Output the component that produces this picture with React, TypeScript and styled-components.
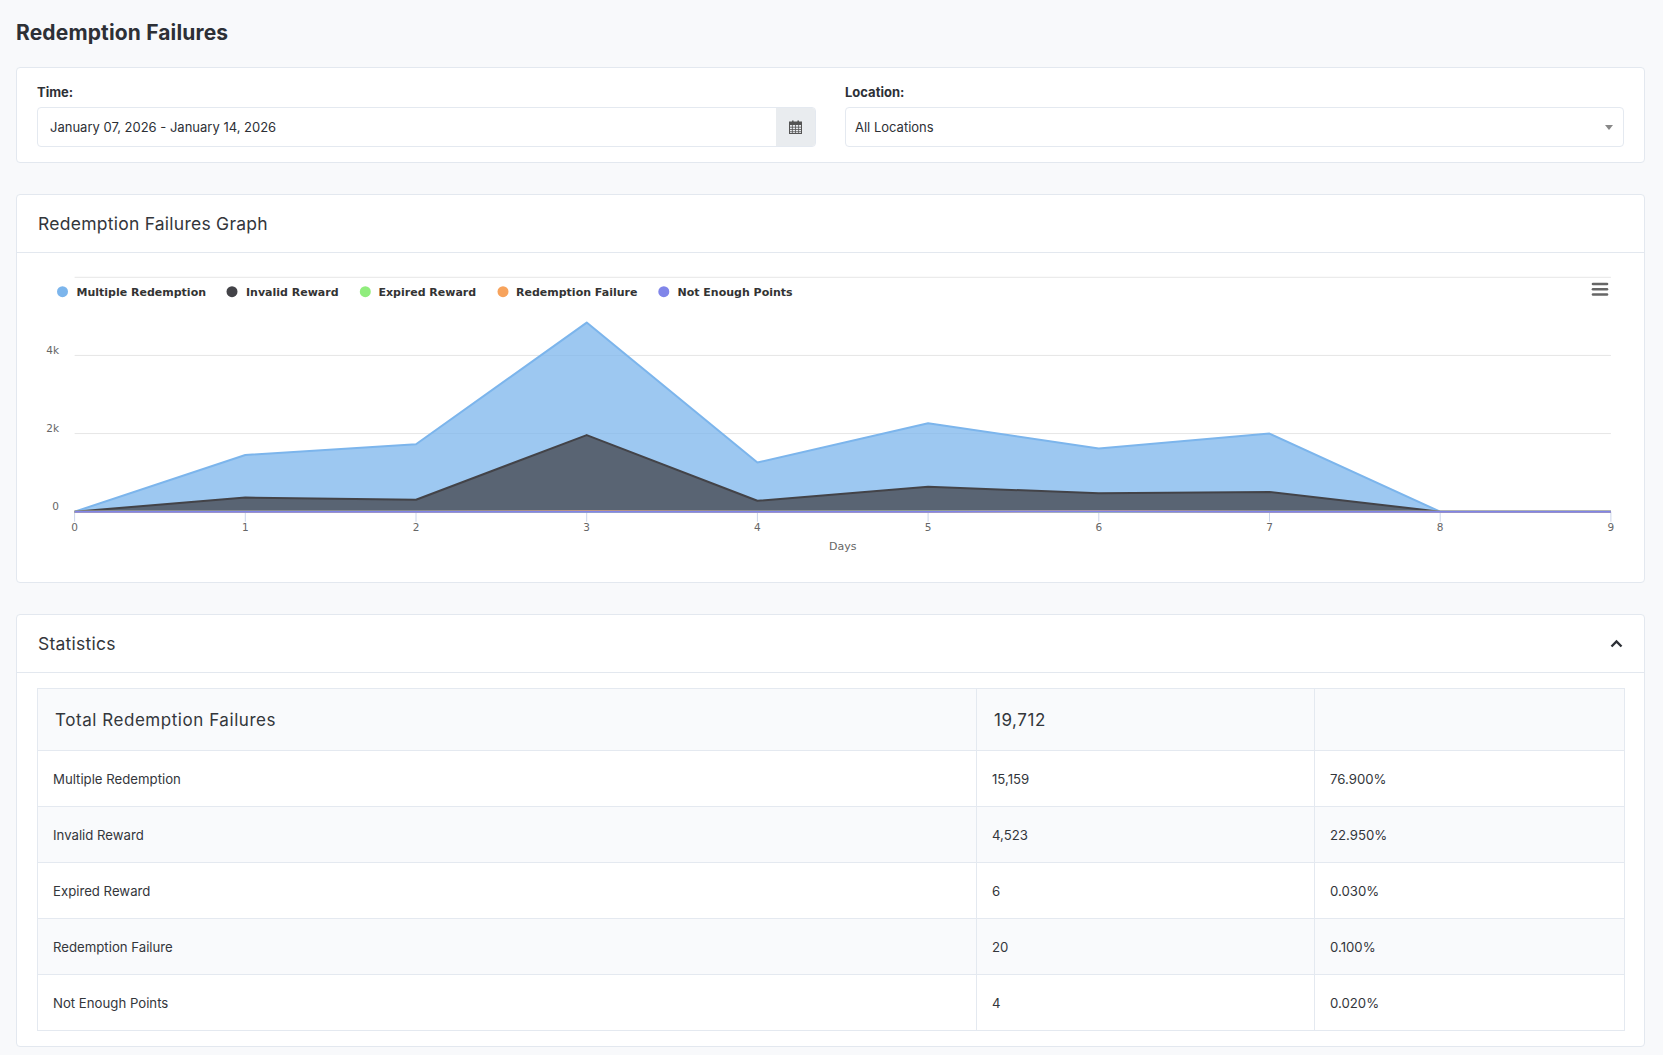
import React from 'react'
import styled, { createGlobalStyle } from 'styled-components'

// Page wide defaults.
const GlobalStyle = createGlobalStyle`
    body {
        margin: 0;
        background-color: #f8f9fb;
        font-family: Inter, Roboto, "Liberation Sans", Arial, sans-serif;
        color: #33363b;
    }
`

const chartFont = '"Lucida Grande", "Lucida Sans Unicode", "DejaVu Sans", Verdana, sans-serif'

const Page = styled.div`
    padding: 20px 18px 8px 16px;
    display: flex;
    flex-flow: column;
    gap: 31px;
`

const PageTitle = styled.h1`
    margin: 0 0 -10px 0;
    font-size: 21px;
    line-height: 26px;
    font-weight: bold;
    letter-spacing: 0.15px;
    color: #2d3036;
`

const Card = styled.section`
    background-color: #ffffff;
    border: 1px solid #e3e8ef;
    border-radius: 4px;
`

const CardHeader = styled.header`
    display: flex;
    justify-content: space-between;
    align-items: center;
    height: 57px;
    padding: 0 21px 0 21px;
    border-bottom: 1px solid #e3e8ef;
`

const CardTitle = styled.h2`
    margin: 0;
    font-size: 17.5px;
    font-weight: normal;
    letter-spacing: 0.25px;
    color: #33363b;
`

// üê∏: Filter bar with the time and location fields.
const FilterGrid = styled.div`
    display: grid;
    grid-template-columns: 1fr 1fr;
    gap: 29px;
    padding: 16px 20px 15px 20px;
`

const Field = styled.div`
    display: flex;
    flex-flow: column;
    gap: 7px;
`

const FieldLabel = styled.label`
    font-size: 13px;
    line-height: 16px;
    font-weight: bold;
    color: #2d3036;
`

const InputGroup = styled.div`
    display: flex;
    height: 40px;
    border: 1px solid #e4e9f0;
    border-radius: 4px;
    overflow: hidden;
    box-sizing: border-box;
`

const InputText = styled.div<{ $pad?: number }>`
    flex: 1;
    display: flex;
    align-items: center;
    justify-content: space-between;
    padding: 0 10px 0 ${(p) => p.$pad ?? 12}px;
    font-size: 13px;
    color: #2d3036;
`

const Addon = styled.div`
    width: 39px;
    display: flex;
    align-items: center;
    justify-content: center;
    background-color: #e9ecef;
`

const Caret = styled.span`
    width: 0;
    height: 0;
    border-left: 4px solid transparent;
    border-right: 4px solid transparent;
    border-top: 5px solid #888888;
`

const ChartBody = styled.div`
    padding: 15px 20px 14px 20px;
    height: 300px;
`

const TableBody = styled.div`
    padding: 15px 20px 15px 20px;
`

const StatsTable = styled.table`
    width: 100%;
    border-collapse: collapse;
    table-layout: fixed;
    color: #33363b;
`

const Row = styled.tr<{ $shade: boolean; $head?: boolean }>`
    height: ${(p) => (p.$head ? 62 : 56)}px;
    background-color: ${(p) => (p.$shade ? '#f9fafc' : '#ffffff')};
`

const Cell = styled.td<{ $head?: boolean }>`
    border: 1px solid #e4e9f0;
    padding: 0 16px;
    font-size: ${(p) => (p.$head ? 17 : 13.2)}px;
    letter-spacing: ${(p) => (p.$head ? '0.55px' : 'normal')};
    padding-left: ${(p) => (p.$head ? 17 : 15)}px;
`

const CalendarIcon = () => (
    <svg width="13" height="14" viewBox="0 0 13 14">
        <rect x="0.5" y="2" width="12" height="11.5" fill="none" stroke="#555" strokeWidth="1" />
        <rect x="0.5" y="2" width="12" height="3" fill="#555" />
        <rect x="3" y="0.5" width="1.6" height="3" fill="#555" />
        <rect x="8.4" y="0.5" width="1.6" height="3" fill="#555" />
        {[7.2, 9.5, 11.7].map((y) => (
            <line key={y} x1="0.5" x2="12.5" y1={y} y2={y} stroke="#555" strokeWidth="0.8" />
        ))}
        {[3.4, 6.5, 9.6].map((x) => (
            <line key={x} x1={x} x2={x} y1="5" y2="13.5" stroke="#555" strokeWidth="0.8" />
        ))}
    </svg>
)

const ChevronUp = () => (
    <svg width="13" height="9" viewBox="0 0 13 9">
        <polyline points="1.5,7.5 6.5,2.5 11.5,7.5" fill="none" stroke="#2d3036" strokeWidth="2.4" />
    </svg>
)

// üê∏: Chart data, one value per day.
const series = [
    { name: 'Multiple Redemption', color: '#7cb5ec', values: [0, 1452, 1726, 4840, 1260, 2265, 1616, 2000, 0, 0] },
    { name: 'Invalid Reward', color: '#434348', values: [0, 360, 305, 1960, 280, 640, 470, 508, 0, 0] },
    { name: 'Expired Reward', color: '#90ed7d', values: [0, 0, 0, 0, 0, 6, 0, 0, 0, 0] },
    { name: 'Redemption Failure', color: '#f7a35c', values: [0, 0, 0, 10, 0, 0, 10, 0, 0, 0] },
    { name: 'Not Enough Points', color: '#8085e9', values: [0, 0, 0, 0, 0, 0, 4, 0, 0, 0] },
]

const legendPos = [
    { dot: 25.5, text: 39.5 },
    { dot: 195, text: 209 },
    { dot: 328.3, text: 341.5 },
    { dot: 466, text: 479 },
    { dot: 626.8, text: 640.5 },
]

const X0 = 37.6
const STEP = 170.7
const BASE = 243.7
const TOP = 9.3
const xAt = (i: number) => X0 + i * STEP
const yAt = (v: number) => BASE - (v / 6000) * (BASE - TOP)

const AreaChart = () => {
    const width = 1587
    return (
        <svg width={width} height="300" viewBox={`0 0 ${width} 300`} style={{ display: 'block', fontFamily: chartFont }}>
            {[0, 2000, 4000, 6000].map((v) => (
                <line key={v} x1={X0} x2={xAt(9)} y1={yAt(v)} y2={yAt(v)} stroke="#e6e6e6" strokeWidth="1" />
            ))}
            {['0', '2k', '4k'].map((l, i) => (
                <text key={l} x="22" y={yAt(i * 2000) - 1.5} textAnchor="end" fontSize="10.5" fill="#666666">
                    {l}
                </text>
            ))}
            {Array.from({ length: 10 }, (_, i) => (
                <g key={i}>
                    <line x1={xAt(i)} x2={xAt(i)} y1={BASE} y2={BASE + 10} stroke="#ccd6eb" strokeWidth="1" />
                    <text x={xAt(i)} y="262.7" textAnchor="middle" fontSize="10.5" fill="#666666">
                        {i}
                    </text>
                </g>
            ))}
            <line x1={X0} x2={xAt(9)} y1={BASE} y2={BASE} stroke="#ccd6eb" strokeWidth="1" />
            <text x={(X0 + xAt(9)) / 2} y="282" textAnchor="middle" fontSize="11" fill="#666666">
                Days
            </text>
            {series.map((s) => {
                const line = s.values.map((v, i) => `${i ? 'L' : 'M'}${xAt(i).toFixed(1)},${yAt(v).toFixed(1)}`).join(' ')
                const area = `${line} L${xAt(9)},${BASE} L${X0},${BASE} Z`
                return (
                    <g key={s.name}>
                        <path d={area} fill={s.color} fillOpacity="0.75" />
                        <path d={line} fill="none" stroke={s.color} strokeWidth="2" strokeLinejoin="round" />
                    </g>
                )
            })}
            {series.map((s, i) => (
                <g key={s.name}>
                    <circle cx={legendPos[i].dot} cy="23.7" r="5.5" fill={s.color} />
                    <text x={legendPos[i].text} y="27.8" fontSize="11" fontWeight="bold" fill="#333333">
                        {s.name}
                    </text>
                </g>
            ))}
            <g stroke="#666666" strokeWidth="2.6" strokeLinecap="round">
                <line x1="1556" x2="1570" y1="16" y2="16" />
                <line x1="1556" x2="1570" y1="21.3" y2="21.3" />
                <line x1="1556" x2="1570" y1="26.5" y2="26.5" />
            </g>
        </svg>
    )
}

const rows = [
    { name: 'Multiple Redemption', count: '15,159', share: '76.900%' },
    { name: 'Invalid Reward', count: '4,523', share: '22.950%' },
    { name: 'Expired Reward', count: '6', share: '0.030%' },
    { name: 'Redemption Failure', count: '20', share: '0.100%' },
    { name: 'Not Enough Points', count: '4', share: '0.020%' },
]

export default function App(): JSX.Element {
    return (
        <>
            <GlobalStyle />
            <Page>
                <PageTitle>Redemption Failures</PageTitle>

                <Card>
                    <FilterGrid>
                        <Field>
                            <FieldLabel>Time:</FieldLabel>
                            <InputGroup>
                                <InputText>January 07, 2026 - January 14, 2026</InputText>
                                <Addon>
                                    <CalendarIcon />
                                </Addon>
                            </InputGroup>
                        </Field>
                        <Field>
                            <FieldLabel>Location:</FieldLabel>
                            <InputGroup>
                                <InputText $pad={9}>
                                    All Locations
                                    <Caret />
                                </InputText>
                            </InputGroup>
                        </Field>
                    </FilterGrid>
                </Card>

                <Card>
                    <CardHeader>
                        <CardTitle>Redemption Failures Graph</CardTitle>
                    </CardHeader>
                    <ChartBody>
                        <AreaChart />
                    </ChartBody>
                </Card>

                <Card>
                    <CardHeader>
                        <CardTitle>Statistics</CardTitle>
                        <ChevronUp />
                    </CardHeader>
                    <TableBody>
                        <StatsTable>
                            <colgroup>
                                <col style={{ width: 939 }} />
                                <col style={{ width: 338 }} />
                                <col style={{ width: 310 }} />
                            </colgroup>
                            <tbody>
                                <Row $shade $head>
                                    <Cell $head>Total Redemption Failures</Cell>
                                    <Cell $head>19,712</Cell>
                                    <Cell $head></Cell>
                                </Row>
                                {rows.map((r, i) => (
                                    <Row key={r.name} $shade={i % 2 === 1}>
                                        <Cell>{r.name}</Cell>
                                        <Cell>{r.count}</Cell>
                                        <Cell>{r.share}</Cell>
                                    </Row>
                                ))}
                            </tbody>
                        </StatsTable>
                    </TableBody>
                </Card>
            </Page>
        </>
    )
}
